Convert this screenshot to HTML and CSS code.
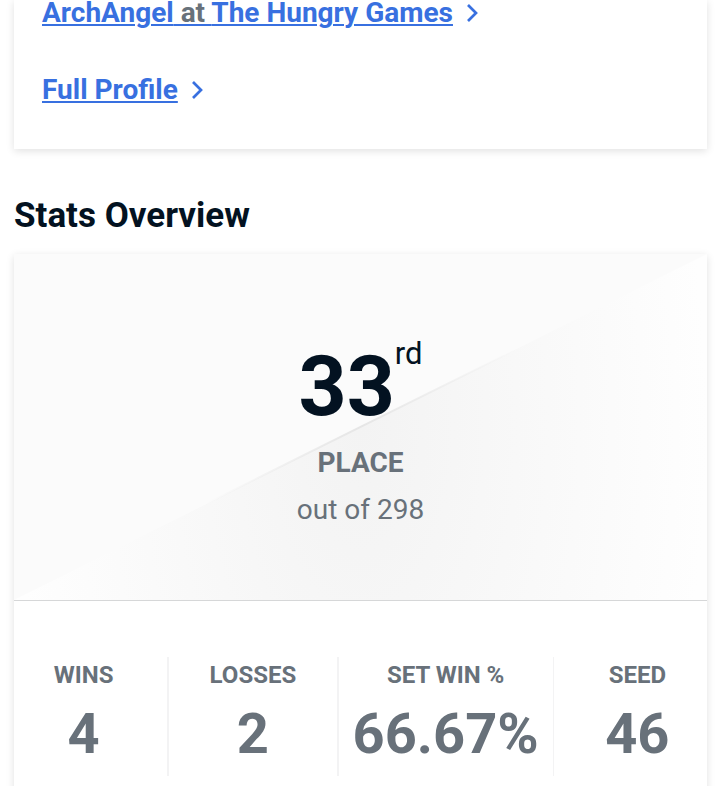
FILE: index.html
```html
<!DOCTYPE html>
<html lang="en">
<head>
<meta charset="utf-8">
<meta name="viewport" content="width=device-width, initial-scale=1">
<title>Stats Overview</title>
<link rel="stylesheet" href="styles.css">
</head>
<body>
<main class="page">
  <section class="card profile">
    <p class="profile-line"><a href="#event"><span>ArchAngel</span><span class="at"> at </span><span>The Hungry Games</span></a><svg class="chevron" viewBox="0 0 14 20" aria-hidden="true"><path d="M2 2l8 8-8 8"/></svg></p>
    <p class="profile-line"><a href="#profile">Full Profile</a><svg class="chevron" viewBox="0 0 14 20" aria-hidden="true"><path d="M2 2l8 8-8 8"/></svg></p>
  </section>
  <h2 class="title">Stats Overview</h2>
  <section class="card">
    <div class="placement">
      <svg class="sheen" viewBox="0 0 694 346" preserveAspectRatio="none" aria-hidden="true">
        <defs>
          <radialGradient id="sheen" gradientUnits="userSpaceOnUse" cx="347" cy="173" r="347" gradientTransform="translate(0 -173) scale(1 2)">
            <stop offset="0" stop-color="#f3f3f3"/>
            <stop offset="1" stop-color="#fefefe"/>
          </radialGradient>
          <linearGradient id="edge" gradientUnits="userSpaceOnUse" x1="190" y1="0" x2="504" y2="0">
            <stop offset="0" stop-color="#e6e6e6" stop-opacity="0"/>
            <stop offset="0.5" stop-color="#e6e6e6"/>
            <stop offset="1" stop-color="#e6e6e6" stop-opacity="0"/>
          </linearGradient>
        </defs>
        <path d="M0 346L694 0V346Z" fill="url(#sheen)"/>
        <path d="M190 251L504 95" fill="none" stroke="url(#edge)" stroke-width="2"/>
      </svg>
      <p class="rank">33<sup>rd</sup></p>
      <p class="place">PLACE</p>
      <p class="total">out of 298</p>
    </div>
    <dl class="stats">
      <div class="stat"><dt>WINS</dt><dd>4</dd></div>
      <div class="stat"><dt>LOSSES</dt><dd>2</dd></div>
      <div class="stat"><dt>SET WIN %</dt><dd>66.67%</dd></div>
      <div class="stat"><dt>SEED</dt><dd>46</dd></div>
    </dl>
  </section>
</main>
</body>
</html>
```
FILE: styles.css
```css
* { box-sizing: border-box; }
html { overflow-x: hidden; scrollbar-width: none; }
body {
  margin: 0;
  background: #fff;
  color: #031221;
  font-family: Roboto, "Liberation Sans", sans-serif;
}
p, h2, dl, dd { margin: 0; }
.page { padding: 0 13px 0 14px; }
.card { background: #fff; box-shadow: 0 2px 8px rgba(0, 0, 0, 0.12); }
.profile { padding: 0 28px 46px; }
.profile-line {
  display: flex;
  align-items: center;
  gap: 13px;
  font-size: 28px;
  line-height: 26px;
  font-weight: 700;
}
.profile-line + .profile-line { padding-top: 51px; }
.profile-line a {
  color: #3870e0;
  text-decoration-thickness: 2px;
  text-underline-offset: 2px;
}
.at { color: #68717a; }
.chevron {
  width: 14px;
  height: 20px;
  fill: none;
  stroke: #3870e0;
  stroke-width: 2.7;
}
.title {
  padding: 46px 0 17px;
  font-size: 35px;
  line-height: 42px;
  font-weight: 700;
}
.placement {
  position: relative;
  padding: 85px 0 74px;
  background: #fbfbfb;
  border-bottom: 1px solid #d6d7d8;
  text-align: center;
}
.placement p { position: relative; }
.sheen { position: absolute; inset: 0; width: 100%; height: 100%; }
.rank {
  display: flex;
  justify-content: center;
  font-size: 84px;
  line-height: 96px;
  font-weight: 700;
}
.rank sup { font-size: 31px; line-height: 30px; font-weight: 400; }
.place { padding-top: 12px; color: #68717a; font-size: 28px; line-height: 32px; font-weight: 700; }
.total { padding-top: 15px; color: #68717a; font-size: 28px; line-height: 32px; }
.stats {
  display: flex;
  padding: 56px 0 40px;
  color: #68717a;
  text-align: center;
}
.stat {
  box-sizing: content-box;
  flex: 1 1 0;
  height: 119px;
  padding: 0 14px;
  border-right: 2px solid #f3f3f4;
}
.stat:first-child { padding-left: 0; }
.stat:nth-child(3) { border-right-width: 1px; }
.stat:last-child { padding-right: 0; border-right: 0; }
.stat dt { font-size: 24px; line-height: 36px; font-weight: 700; }
.stat dd { padding-top: 7px; font-size: 56px; line-height: 68px; font-weight: 700; }
```
